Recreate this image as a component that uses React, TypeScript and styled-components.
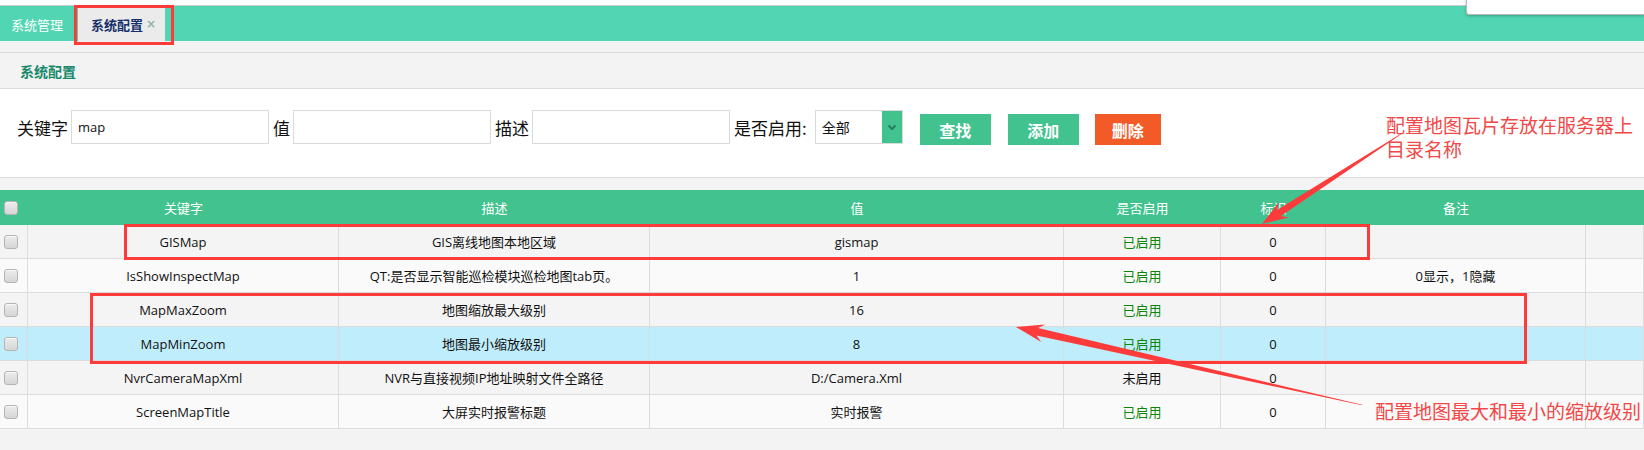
import React from "react";
import styled, { createGlobalStyle } from "styled-components";

const GlobalStyle = createGlobalStyle`
  html, body { margin: 0; padding: 0; background: #f3f3f3; }
  body {
    font-family: "Open Sans", "Noto Sans CJK SC", sans-serif;
    width: 1644px;
    height: 450px;
    overflow: hidden;
  }
  * { box-sizing: border-box; }
`;

const Page = styled.div`
  position: relative;
  width: 1644px;
  height: 450px;
  overflow: hidden;
  background: #f3f3f3;
`;

const TopStrip = styled.div`
  height: 5px;
  background: #ffffff;
`;

const TabBar = styled.div`
  height: 36px;
  border-top: 1px solid #c6cfcc;
  background: #52d5b2;
  display: flex;
  align-items: flex-end;
`;

const Tab = styled.div<{ $active?: boolean }>`
  height: 34px;
  display: flex;
  align-items: center;
  font-family: "Noto Sans CJK SC", sans-serif;
  font-size: 13px;
  padding: ${(p) => (p.$active ? "0 9px 0 13px" : "0 11px")};
  margin-right: 4px;
  color: ${(p) => (p.$active ? "#16306a" : "#ffffff")};
  font-weight: ${(p) => (p.$active ? 700 : 400)};
  background: ${(p) => (p.$active ? "#ebebeb" : "transparent")};
`;

const TabClose = styled.span`
  margin-left: 3px;
  font-size: 12px;
  font-weight: 700;
  color: #8fb5a8;
  font-family: "DejaVu Sans", sans-serif;
`;

const Gap = styled.div<{ $h: number }>`
  height: ${(p) => p.$h}px;
  background: #f3f3f3;
`;

const SectionHeader = styled.div`
  height: 37px;
  border-top: 1px solid #dcdcdc;
  border-bottom: 1px solid #dcdcdc;
  background: #f3f3f3;
  display: flex;
  align-items: center;
  padding-left: 20px;
  font-family: "Noto Sans CJK SC", sans-serif;
  font-size: 14px;
  font-weight: 700;
  color: #17896b;
`;

const SearchBar = styled.div`
  height: 89px;
  background: #ffffff;
  border-bottom: 1px solid #dcdcdc;
  display: flex;
  align-items: flex-start;
  padding: 21px 0 0 17px;
`;

const Label = styled.span<{ $gap?: number }>`
  height: 34px;
  display: flex;
  align-items: center;
  font-family: "Noto Sans CJK SC", sans-serif;
  font-size: 17px;
  color: #111;
  margin-right: ${(p) => p.$gap ?? 3}px;
`;

const TextInput = styled.div`
  width: 198px;
  height: 34px;
  border: 1px solid #dadada;
  background: #fff;
  margin-right: 4px;
  display: flex;
  align-items: center;
  padding-left: 6px;
  font-size: 13px;
  color: #111;
`;

const Select = styled.div`
  width: 88px;
  height: 34px;
  border: 1px solid #dadada;
  background: #fff;
  display: flex;
`;

const SelectText = styled.span`
  flex: 1;
  display: flex;
  align-items: center;
  padding-left: 6px;
  font-family: "Noto Sans CJK SC", sans-serif;
  font-size: 14px;
  color: #111;
`;

const SelectBtn = styled.span`
  width: 20px;
  margin: 0 0 0 0;
  background: #41c28f;
  display: flex;
  align-items: center;
  justify-content: center;
`;

const Button = styled.div<{ $bg: string; $w: number; $ml: number }>`
  width: ${(p) => p.$w}px;
  height: 31px;
  margin-top: 4px;
  margin-left: ${(p) => p.$ml}px;
  background: ${(p) => p.$bg};
  color: #fff;
  font-family: "Noto Sans CJK SC", sans-serif;
  font-weight: 700;
  font-size: 16px;
  display: flex;
  align-items: center;
  justify-content: center;
`;

const COLS = "28px 311px 311px 414px 157px 105px 260px 58px";

const HeadRow = styled.div`
  display: grid;
  grid-template-columns: ${COLS};
  height: 35px;
  background: #41c28f;
  color: #fff;
  font-family: "Noto Sans CJK SC", sans-serif;
  font-size: 13px;
`;

const HeadCell = styled.div`
  display: flex;
  align-items: center;
  justify-content: center;
`;

const Row = styled.div<{ $bg: string }>`
  display: grid;
  grid-template-columns: ${COLS};
  height: 34px;
  background: ${(p) => p.$bg};
  border-bottom: 1px solid #dcdcdc;
  font-size: 13px;
  color: #111;
`;

const Cell = styled.div<{ $color?: string }>`
  display: flex;
  align-items: center;
  justify-content: center;
  border-right: 1px solid #dcdcdc;
  color: ${(p) => p.$color ?? "#111"};
  white-space: nowrap;
`;

const CheckCell = styled.div<{ $border?: boolean }>`
  display: flex;
  align-items: center;
  padding-left: 4px;
  border-right: ${(p) => (p.$border ? "1px solid #dcdcdc" : "none")};
`;

const Check = styled.span`
  width: 14px;
  height: 14px;
  border-radius: 3px;
  border: 1px solid #b4b4b4;
  background: linear-gradient(#ececec, #d6d6d6);
  box-shadow: inset 0 1px 0 #fafafa;
`;

const Overlay = styled.div`
  position: absolute;
  inset: 0;
  pointer-events: none;
`;

const RedBox = styled.div`
  position: absolute;
  border: 3px solid #fd3b3b;
`;

const Note = styled.div`
  position: absolute;
  font-family: "Noto Sans CJK SC", sans-serif;
  font-size: 19px;
  line-height: 24px;
  color: #f24848;
  white-space: nowrap;
`;

const Popup = styled.div`
  position: absolute;
  top: -4px;
  right: 0;
  width: 178px;
  height: 19px;
  background: #fff;
  border: 1px solid #b9b9b9;
  border-right: none;
  border-radius: 0 0 0 3px;
  box-shadow: 0 1px 3px rgba(0, 0, 0, 0.25);
`;

const ArrowSvg = styled.svg`
  position: absolute;
  left: 0;
  top: 0;
`;

type Data = {
  key: string;
  desc: string;
  value: string;
  enabled: boolean;
  flag: string;
  remark: string;
  bg: string;
};

const rows: Data[] = [
  { key: "GISMap", desc: "GIS离线地图本地区域", value: "gismap", enabled: true, flag: "0", remark: "", bg: "#f4f4f4" },
  { key: "IsShowInspectMap", desc: "QT:是否显示智能巡检模块巡检地图tab页。", value: "1", enabled: true, flag: "0", remark: "0显示，1隐藏", bg: "#fafafa" },
  { key: "MapMaxZoom", desc: "地图缩放最大级别", value: "16", enabled: true, flag: "0", remark: "", bg: "#f4f4f4" },
  { key: "MapMinZoom", desc: "地图最小缩放级别", value: "8", enabled: true, flag: "0", remark: "", bg: "#bfedfb" },
  { key: "NvrCameraMapXml", desc: "NVR与直接视频IP地址映射文件全路径", value: "D:/Camera.Xml", enabled: false, flag: "0", remark: "", bg: "#f4f4f4" },
  { key: "ScreenMapTitle", desc: "大屏实时报警标题", value: "实时报警", enabled: true, flag: "0", remark: "", bg: "#fafafa" },
];

function arrowPoints(
  tx: number, ty: number, px: number, py: number,
  tailW: number, shaftW: number, headLen: number, headW: number
) {
  const dx = px - tx;
  const dy = py - ty;
  const len = Math.hypot(dx, dy);
  const ux = dx / len;
  const uy = dy / len;
  const nx = -uy;
  const ny = ux;
  const jx = px - ux * headLen * 0.78;
  const jy = py - uy * headLen * 0.78;
  const bx = px - ux * headLen;
  const by = py - uy * headLen;
  const pts = [
    [tx + nx * tailW, ty + ny * tailW],
    [jx + nx * shaftW, jy + ny * shaftW],
    [bx + nx * headW, by + ny * headW],
    [px, py],
    [bx - nx * headW, by - ny * headW],
    [jx - nx * shaftW, jy - ny * shaftW],
    [tx - nx * tailW, ty - ny * tailW],
  ];
  return pts.map((p) => p.map((v) => v.toFixed(1)).join(",")).join(" ");
}

export default function App() {
  return (
    <Page>
      <GlobalStyle />
      <TopStrip />
      <TabBar>
        <Tab>系统管理</Tab>
        <Tab $active>
          系统配置<TabClose>×</TabClose>
        </Tab>
      </TabBar>
      <Gap $h={11} />
      <SectionHeader>系统配置</SectionHeader>
      <SearchBar>
        <Label>关键字</Label>
        <TextInput>map</TextInput>
        <Label>值</Label>
        <TextInput />
        <Label>描述</Label>
        <TextInput />
        <Label $gap={8}>是否启用:</Label>
        <Select>
          <SelectText>全部</SelectText>
          <SelectBtn>
            <svg width="10" height="7" viewBox="0 0 10 7">
              <polyline points="1.5,1.5 5,5 8.5,1.5" fill="none" stroke="#2b7d5f" strokeWidth="2" />
            </svg>
          </SelectBtn>
        </Select>
        <Button $bg="#41c28f" $w={71} $ml={17}>查找</Button>
        <Button $bg="#41c28f" $w={71} $ml={17}>添加</Button>
        <Button $bg="#f25b28" $w={66} $ml={16}>删除</Button>
      </SearchBar>
      <Gap $h={12} />
      <HeadRow>
        <CheckCell>
          <Check />
        </CheckCell>
        <HeadCell>关键字</HeadCell>
        <HeadCell>描述</HeadCell>
        <HeadCell>值</HeadCell>
        <HeadCell>是否启用</HeadCell>
        <HeadCell>标识</HeadCell>
        <HeadCell>备注</HeadCell>
        <HeadCell />
      </HeadRow>
      {rows.map((r) => (
        <Row key={r.key} $bg={r.bg}>
          <CheckCell $border>
            <Check />
          </CheckCell>
          <Cell>{r.key}</Cell>
          <Cell>{r.desc}</Cell>
          <Cell>{r.value}</Cell>
          <Cell $color={r.enabled ? "#0b860b" : "#111"}>{r.enabled ? "已启用" : "未启用"}</Cell>
          <Cell>{r.flag}</Cell>
          <Cell>{r.remark}</Cell>
          <Cell />
        </Row>
      ))}

      <Overlay>
        <Popup />
        <RedBox style={{ left: 74, top: 5, width: 100, height: 40 }} />
        <RedBox style={{ left: 124, top: 224, width: 1246, height: 36 }} />
        <RedBox style={{ left: 90, top: 293, width: 1437, height: 71 }} />
        <Note style={{ left: 1386, top: 113 }}>
          配置地图瓦片存放在服务器上
          <br />
          目录名称
        </Note>
        <Note style={{ left: 1375, top: 399 }}>配置地图最大和最小的缩放级别</Note>
        <ArrowSvg width="1644" height="450" viewBox="0 0 1644 450">
          <polygon points={arrowPoints(1401, 134, 1262, 224, 0.3, 3.5, 26, 9)} fill="#fd3b3b" />
          <polygon points={arrowPoints(1362, 405, 1016, 327, 0.3, 3.8, 28, 9)} fill="#fd3b3b" />
        </ArrowSvg>
      </Overlay>
    </Page>
  );
}
